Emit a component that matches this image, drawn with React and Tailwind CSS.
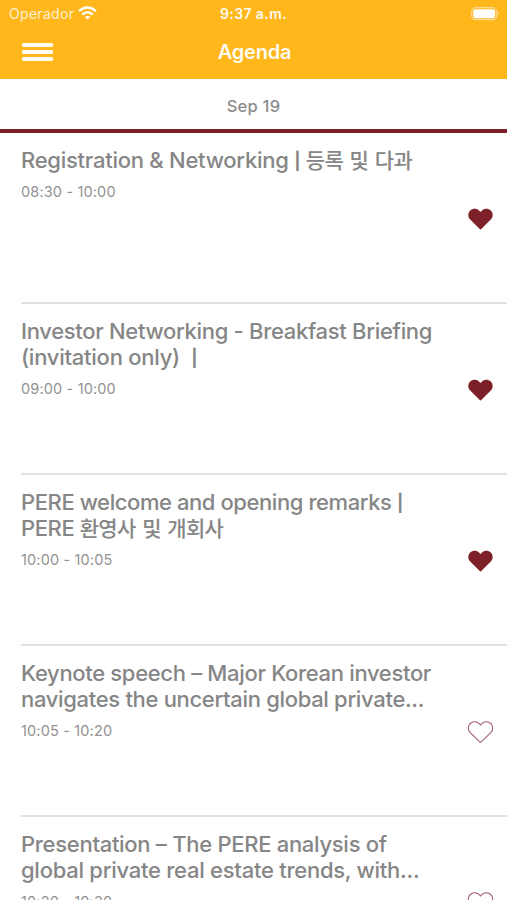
const HEART =
  'M12 21.2 L2.2 11.6 C-0.4 9 -0.2 4.9 2.2 2.5 C4.7 0.1 8.8 0.2 11.2 2.7 L12.5 4 L13.8 2.7 C16.2 0.2 20.3 0.1 22.8 2.5 C25.2 4.9 25.4 9 22.8 11.6 L13 21.2 Q12.5 21.7 12 21.2 Z';

const Bar = () => <span className="inline-block w-[6px] text-center align-[1px] text-[17px] leading-none font-bold tracking-normal">|</span>;
const Ko = ({ children }) => <span className="text-[21px] leading-none tracking-[-0.75px] [word-spacing:1.8px]">{children}</span>;

const SESSIONS = [
  {
    lines: [[<>Registration & Networking <Bar /> <Ko>등록 및 다과</Ko></>, 'tracking-[-0.26px]']],
    time: '08:30 - 10:00',
    saved: true,
  },
  {
    lines: [['Investor Networking - Breakfast Briefing', 'tracking-[-0.31px]'], [<>(invitation only)  <Bar /></>, 'tracking-[-0.25px]']],
    time: '09:00 - 10:00',
    saved: true,
  },
  {
    lines: [[<>PERE welcome and opening remarks <Bar /></>, 'tracking-[-0.42px]'], [<>PERE <Ko>환영사 및 개회사</Ko></>, 'tracking-[-0.4px]']],
    time: '10:00 - 10:05',
    saved: true,
  },
  {
    lines: [['Keynote speech – Major Korean investor', 'tracking-[-0.33px]'], ['navigates the uncertain global private...', 'tracking-[-0.32px]']],
    time: '10:05 - 10:20',
    saved: false,
  },
  {
    lines: [['Presentation – The PERE analysis of', 'tracking-[-0.29px]'], ['global private real estate trends, with...', 'tracking-[-0.26px]']],
    time: '10:20 - 10:30',
    saved: false,
  },
];

function Heart({ filled }) {
  return (
    <svg className="h-[22px] w-[25px] overflow-visible" viewBox="0 0 25 22">
      <path d={HEART} fill={filled ? '#7d2028' : 'none'} stroke={filled ? 'none' : '#a5606c'} strokeWidth="1.1" />
    </svg>
  );
}

function Session({ lines, time, saved }) {
  return (
    <li className="ml-[21px] flex h-[171px] shrink-0 justify-between border-b-2 border-[#e2e2e2] pr-[14.5px]">
      <div className="pt-[14px]">
        <h2 className="text-[22px] leading-[26px] font-medium whitespace-pre text-[#868686]">
          {lines.map(([text, tracking], i) => (
            <span key={i} className={`block h-[26px] ${tracking}`}>{text}</span>
          ))}
        </h2>
        <p className="mt-[9px] text-[14.5px] leading-5 tracking-[0.15px] text-[#929292]">{time}</p>
      </div>
      <div className="pt-[75px]">
        <Heart filled={saved} />
      </div>
    </li>
  );
}

export default function App() {
  return (
    <div className="flex h-[900px] w-[507px] flex-col overflow-hidden bg-white font-['Inter','Noto_Sans_CJK_KR',sans-serif]">
      <header className="h-[79px] shrink-0 bg-[#ffb71c] text-[#fffaf0]">
        <div className="grid h-7 grid-cols-3 items-center pr-[7px] pl-[9px]">
          <div className="flex items-center gap-[4px]">
            <span className="text-[14px] leading-5 tracking-[0.3px] text-[#fff0cf]">Operador</span>
            <svg className="mb-[2px] h-[14px] w-[19px]" viewBox="0 0 19 14" fill="none" stroke="#fff" strokeWidth="2.4">
              <path d="M1 5.2 Q9.5 -2.4 18 5.2" />
              <path d="M4.2 8.7 Q9.5 4 14.8 8.7" />
              <path d="M9.5 13.6 L6.8 10.9 Q9.5 8.9 12.2 10.9 Z" fill="#fff" stroke="none" />
            </svg>
          </div>
          <span className="-ml-[2px] text-center text-[14px] leading-5 font-semibold tracking-[0.4px]">9:37 a.m.</span>
          <svg className="h-[14px] w-[29px] justify-self-end" viewBox="0 0 29 14">
            <rect x="0.7" y="0.7" width="25" height="12" rx="4" fill="none" stroke="#ffdc8f" strokeWidth="1.2" />
            <rect x="2.2" y="2.2" width="22" height="9" rx="2.4" fill="#fff" />
            <path d="M27 4.8 Q29 6.8 27 8.8 Z" fill="#ffdc8f" />
          </svg>
        </div>
        <div className="grid h-[48px] grid-cols-3 items-center px-[22px]">
          <div className="flex w-[31px] flex-col gap-[3px]">
            <span className="h-[4px] rounded-[1px] bg-[#fffaf0]" />
            <span className="h-[4px] rounded-[1px] bg-[#fffaf0]" />
            <span className="h-[4px] rounded-[1px] bg-[#fffaf0]" />
          </div>
          <h1 className="pl-[2px] text-center text-[20px] leading-6 font-semibold tracking-[-0.2px]">Agenda</h1>
        </div>
      </header>
      <div className="flex h-[54px] shrink-0 items-center justify-center border-b-4 border-[#7d2028] pt-[5px] text-[16.5px] font-medium tracking-[0.25px] text-[#8c8c8c]">
        Sep 19
      </div>
      <ul className="flex flex-col">
        {SESSIONS.map((session) => (
          <Session key={session.time} {...session} />
        ))}
      </ul>
    </div>
  );
}
